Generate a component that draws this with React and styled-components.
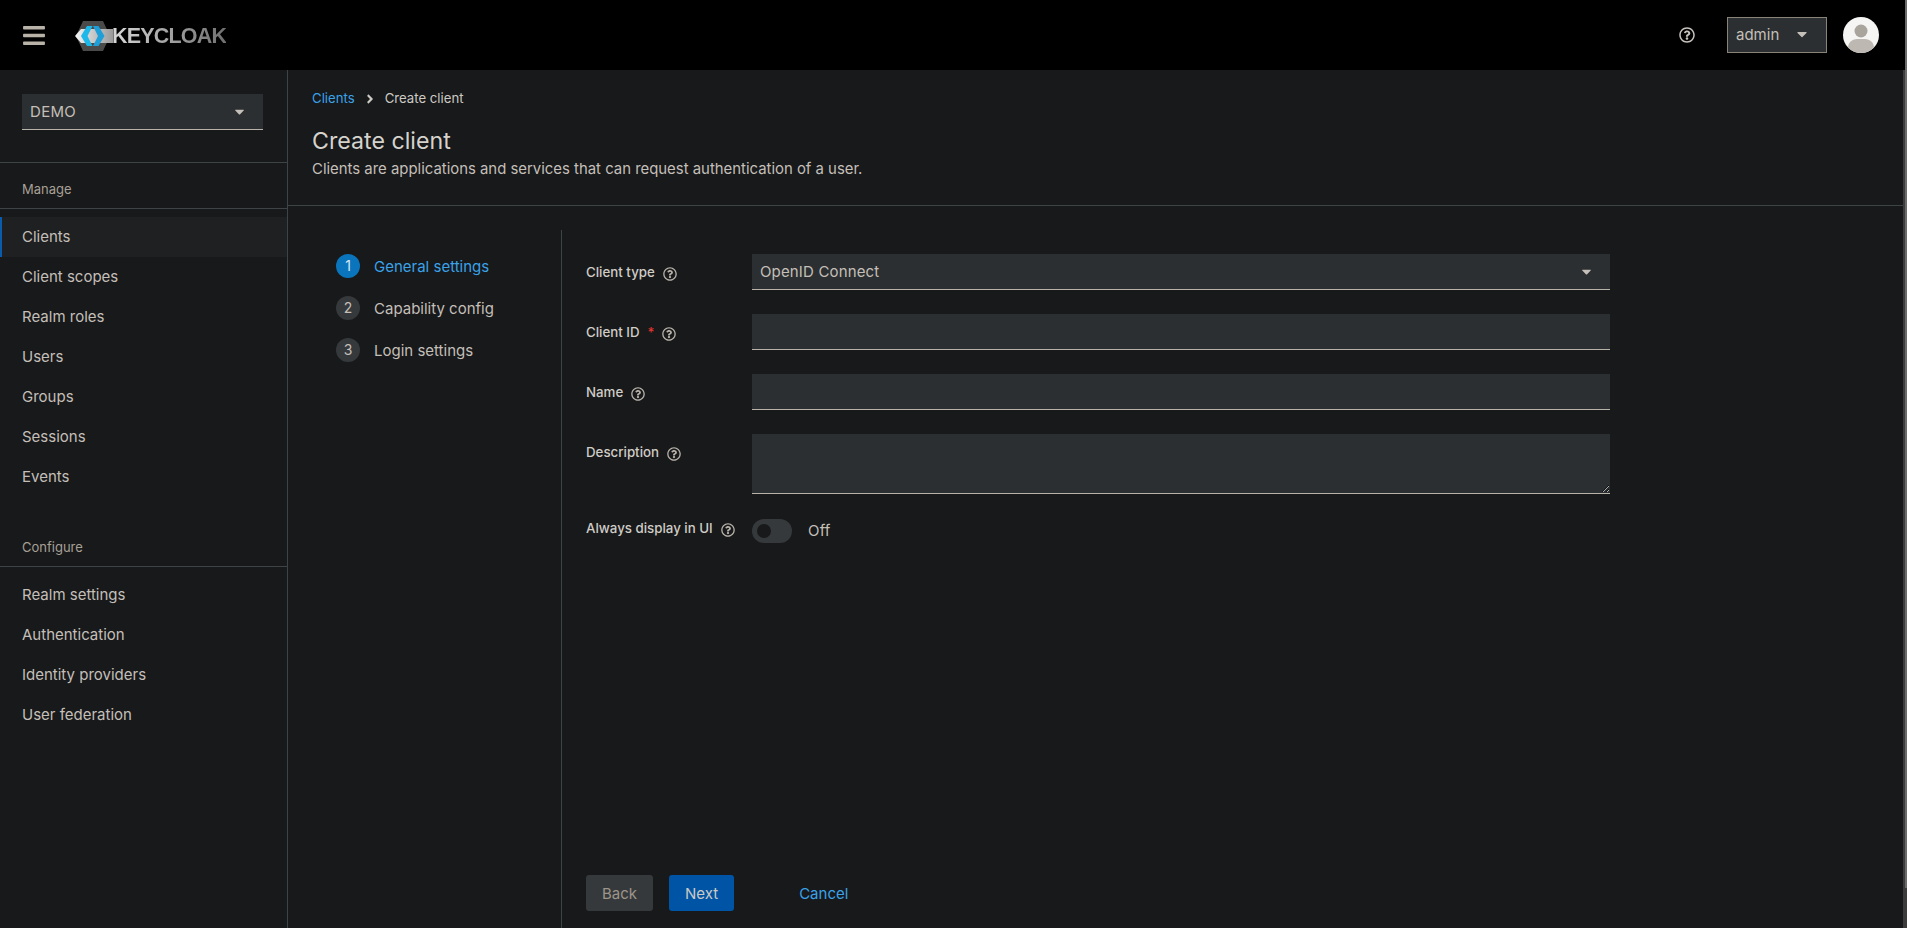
import React from "react";
import styled, { createGlobalStyle } from "styled-components";
import { FaBars, FaCaretDown, FaAngleRight, FaRegQuestionCircle } from "react-icons/fa";

const manageLinks = ["Clients", "Client scopes", "Realm roles", "Users", "Groups", "Sessions", "Events"];
const configureLinks = ["Realm settings", "Authentication", "Identity providers", "User federation"];
const steps = ["General settings", "Capability config", "Login settings"];

export default function App() {
  return (
    <>
      <GlobalStyle />
      <Page>
        <Header>
          <MenuButton>
            <FaBars />
          </MenuButton>
          <Logo>
            <LogoMark />
            <LogoText>KEYCLOAK</LogoText>
          </Logo>
          <HeaderTools>
            <HeaderHelp>
              <FaRegQuestionCircle />
            </HeaderHelp>
            <UserMenu>
              admin
              <FaCaretDown />
            </UserMenu>
            <Avatar />
          </HeaderTools>
        </Header>
        <Body>
          <Sidebar>
            <RealmArea>
              <RealmSelect>
                DEMO
                <FaCaretDown />
              </RealmSelect>
            </RealmArea>
            <NavTitle>Manage</NavTitle>
            <NavList>
              {manageLinks.map((link) => (
                <NavItem key={link} $active={link === "Clients"}>
                  {link}
                </NavItem>
              ))}
            </NavList>
            <NavTitle $second>Configure</NavTitle>
            <NavList>
              {configureLinks.map((link) => (
                <NavItem key={link}>{link}</NavItem>
              ))}
            </NavList>
          </Sidebar>
          <Main>
            <PageHead>
              <Breadcrumb>
                <CrumbLink>Clients</CrumbLink>
                <FaAngleRight />
                <span>Create client</span>
              </Breadcrumb>
              <Title>Create client</Title>
              <Subtitle>Clients are applications and services that can request authentication of a user.</Subtitle>
            </PageHead>
            <Wizard>
              <Steps>
                {steps.map((step, index) => (
                  <Step key={step} $current={index === 0}>
                    <StepNumber $current={index === 0}>{index + 1}</StepNumber>
                    <StepName>{step}</StepName>
                  </Step>
                ))}
              </Steps>
              <WizardMain>
                <Form>
                  <Label>
                    Client type
                    <Help />
                  </Label>
                  <SelectBox>
                    OpenID Connect
                    <FaCaretDown />
                  </SelectBox>
                  <Label>
                    Client ID
                    <Required>*</Required>
                    <Help />
                  </Label>
                  <Input />
                  <Label>
                    Name
                    <Help />
                  </Label>
                  <Input />
                  <Label>
                    Description
                    <Help />
                  </Label>
                  <TextArea />
                  <ToggleLabel>
                    Always display in UI
                    <Help />
                  </ToggleLabel>
                  <ToggleRow>
                    <Toggle>
                      <Knob />
                    </Toggle>
                    <ToggleText>Off</ToggleText>
                  </ToggleRow>
                </Form>
                <Footer>
                  <BackButton>Back</BackButton>
                  <NextButton>Next</NextButton>
                  <CancelLink>Cancel</CancelLink>
                </Footer>
              </WizardMain>
            </Wizard>
          </Main>
          <ScrollEdge />
        </Body>
        <ScrollThumb />
      </Page>
    </>
  );
}

function LogoMark() {
  return (
    <svg width="38" height="32" viewBox="0 0 38 32">
      <defs>
        <linearGradient id="band" x1="0" x2="1" y1="0" y2="0">
          <stop offset="0" stopColor="#f4f4f4" />
          <stop offset="1" stopColor="#9a9a9a" />
        </linearGradient>
      </defs>
      <path d="M8 1H28L35 16L28 31H8L1 16Z" fill="#4a4a4a" />
      <path d="M0 16L6 9H38V23H6Z" fill="url(#band)" />
      <path d="M12 6H17.5L12.5 16L17.5 26H12L6 16Z" fill="#1cb8ea" />
      <path d="M18 6H23.5L29.5 16L23.5 26H18L23 16Z" fill="#1e9fd8" />
    </svg>
  );
}

function Avatar() {
  return (
    <AvatarSvg viewBox="0 0 36 36">
      <defs>
        <clipPath id="avatar-circle">
          <circle cx="18" cy="18" r="18" />
        </clipPath>
      </defs>
      <circle cx="18" cy="18" r="18" fill="#f5f5f4" />
      <g clipPath="url(#avatar-circle)">
        <circle cx="18" cy="14" r="6.5" fill="#a9a49c" />
        <path d="M5 36V31C5 25.5 9 22 14 22H22C27 22 31 25.5 31 31V36Z" fill="#bdb9b2" />
      </g>
    </AvatarSvg>
  );
}

function Help() {
  return (
    <HelpIcon>
      <FaRegQuestionCircle />
    </HelpIcon>
  );
}

const GlobalStyle = createGlobalStyle`
  html, body {
    margin: 0;
    height: 100%;
    overflow: hidden;
    background: #17191b;
  }
  body {
    font-family: Inter, "Liberation Sans", sans-serif;
    font-size: 15px;
    color: #c4bfb8;
  }
`;

const Page = styled.div`
  position: relative;
  height: 928px;
  display: flex;
  flex-direction: column;
`;

const Header = styled.header`
  height: 70px;
  flex: none;
  display: flex;
  align-items: center;
  background: #000;
`;

const MenuButton = styled.div`
  width: 22px;
  margin-left: 23px;
  display: flex;
  color: #b8b2a9;
  svg {
    width: 22px;
    height: 25px;
  }
`;

const Logo = styled.div`
  margin: 2px 0 0 30px;
  display: flex;
  align-items: center;
`;

const LogoText = styled.span`
  margin-left: -1px;
  font-family: "Liberation Sans", sans-serif;
  font-weight: 700;
  font-size: 21.5px;
  letter-spacing: -0.8px;
  background: linear-gradient(90deg, #d8d8d8, #6f6f6f);
  -webkit-background-clip: text;
  background-clip: text;
  color: transparent;
`;

const HeaderTools = styled.div`
  margin-left: auto;
  margin-right: 28px;
  display: flex;
  align-items: center;
`;

const HeaderHelp = styled.div`
  display: flex;
  margin-right: 32px;
  font-size: 16px;
  color: #c8c3bc;
`;

const UserMenu = styled.div`
  box-sizing: border-box;
  width: 100px;
  height: 36px;
  padding: 0 16px 2px 8px;
  display: flex;
  align-items: center;
  justify-content: space-between;
  background: #2b2f31;
  border: 1px solid #8a8378;
  svg {
    font-size: 16px;
  }
`;

const AvatarSvg = styled.svg`
  width: 36px;
  height: 36px;
  margin-left: 16px;
`;

const Body = styled.div`
  flex: 1;
  min-height: 0;
  display: flex;
`;

const Sidebar = styled.aside`
  width: 287px;
  flex: none;
  border-right: 1px solid #3e4446;
`;

const RealmArea = styled.div`
  padding: 24px 24px 32px 22px;
  border-bottom: 1px solid #3e4446;
`;

const RealmSelect = styled.div`
  box-sizing: border-box;
  height: 36px;
  padding: 0 16px 1px 8px;
  display: flex;
  align-items: center;
  justify-content: space-between;
  background: #2b2f31;
  border-bottom: 1px solid #b8b2a9;
  letter-spacing: 0.3px;
`;

const NavTitle = styled.h2`
  margin: ${(p) => (p.$second ? "40px" : "0")} 0 0;
  padding: ${(p) => (p.$second ? "0 22px 8px" : "16px 22px 8px")};
  border-bottom: 1px solid #3e4446;
  font-size: 13px;
  font-weight: 400;
  line-height: 21px;
  color: #a8a095;
`;

const NavList = styled.nav`
  padding-top: 8px;
  display: flex;
  flex-direction: column;
`;

const NavItem = styled.a`
  box-sizing: border-box;
  height: 40px;
  padding: 0 0 2px 22px;
  display: flex;
  align-items: center;
  box-shadow: ${(p) => (p.$active ? "inset 2px 0 0 #0a5cab" : "none")};
  background: ${(p) => (p.$active ? "#1e2022" : "transparent")};
`;

const Main = styled.main`
  flex: 1;
  min-width: 0;
  display: flex;
  flex-direction: column;
`;

const PageHead = styled.div`
  padding: 18px 24px 24px;
  border-bottom: 1px solid #3e4446;
`;

const Breadcrumb = styled.div`
  display: flex;
  align-items: center;
  gap: 8px;
  font-size: 13.2px;
  line-height: 21px;
  color: #cdc9c3;
  svg {
    font-size: 14px;
  }
`;

const CrumbLink = styled.a`
  color: #3aa2e8;
`;

const Title = styled.h1`
  margin: 18px 0 0;
  font-size: 23.2px;
  font-weight: 400;
  line-height: 29px;
  color: #d6d3cd;
`;

const Subtitle = styled.p`
  margin: 1px 0 0;
  font-size: 14.9px;
  line-height: 24px;
`;

const Wizard = styled.div`
  flex: 1;
  min-height: 0;
  display: flex;
`;

const Steps = styled.ol`
  width: 225px;
  margin: 24px 0 0;
  padding: 24px 0 0 48px;
  list-style: none;
  display: flex;
  flex-direction: column;
  gap: 18px;
  border-right: 1px solid #3e4446;
`;

const Step = styled.li`
  height: 24px;
  display: flex;
  align-items: center;
  gap: 14px;
  line-height: 24px;
  color: ${(p) => (p.$current ? "#3aa2e8" : "#c4bfb8")};
`;

const StepNumber = styled.span`
  width: 24px;
  height: 24px;
  border-radius: 50%;
  display: flex;
  align-items: center;
  justify-content: center;
  font-size: 14px;
  background: ${(p) => (p.$current ? "#0a75bd" : "#36393b")};
  color: ${(p) => (p.$current ? "#d8e8f4" : "#c4bfb8")};
`;

const StepName = styled.span`
  padding-top: 1px;
`;

const WizardMain = styled.div`
  flex: 1;
  min-width: 0;
  padding: 48px 0 17px 24px;
  display: flex;
  flex-direction: column;
  justify-content: space-between;
`;

const Form = styled.div`
  width: 1024px;
  display: grid;
  grid-template-columns: 166px 858px;
  row-gap: 24px;
`;

const Label = styled.label`
  align-self: start;
  display: flex;
  align-items: center;
  padding-top: 8px;
  font-size: 13.3px;
  font-weight: 500;
  line-height: 21px;
  white-space: nowrap;
  color: #d0ccc6;
`;

const ToggleLabel = styled(Label)`
  padding-top: 0;
`;

const Required = styled.span`
  margin-left: 8px;
  color: #e0352b;
`;

const HelpIcon = styled.span`
  margin: 2px 0 0 8px;
  display: inline-flex;
  font-size: 14px;
  color: #b8b2a9;
`;

const SelectBox = styled.div`
  box-sizing: border-box;
  height: 36px;
  padding: 0 16px 1px 8px;
  display: flex;
  align-items: center;
  justify-content: space-between;
  background: #2b2f31;
  border-bottom: 1px solid #b8b2a9;
  letter-spacing: 0.15px;
`;

const Input = styled.input`
  box-sizing: border-box;
  height: 36px;
  border: 0;
  border-bottom: 1px solid #b8b2a9;
  border-radius: 0;
  background: #2b2f31;
  outline: none;
`;

const TextArea = styled.textarea`
  box-sizing: border-box;
  height: 60px;
  margin: 0;
  border: 0;
  border-bottom: 1px solid #b8b2a9;
  border-radius: 0;
  background: #2b2f31;
  outline: none;
  resize: vertical;
  color-scheme: dark;
`;

const ToggleRow = styled.div`
  margin-top: 1px;
  display: flex;
  align-items: center;
  gap: 16px;
`;

const ToggleText = styled.span`
  padding-bottom: 2px;
  letter-spacing: 0.2px;
`;

const Toggle = styled.span`
  box-sizing: border-box;
  width: 40px;
  height: 24px;
  padding-left: 5px;
  border-radius: 12px;
  display: flex;
  align-items: center;
  background: #36393b;
`;

const Knob = styled.span`
  width: 14px;
  height: 14px;
  border-radius: 50%;
  background: #17191a;
`;

const Footer = styled.div`
  display: flex;
  align-items: center;
`;

const Button = styled.button`
  height: 36px;
  padding: 0 16px;
  border: 0;
  border-radius: 3px;
  font: inherit;
`;

const BackButton = styled(Button)`
  background: #36393b;
  color: #9c958a;
`;

const NextButton = styled(Button)`
  margin-left: 16px;
  background: #0054a6;
  color: #cdc9c3;
`;

const CancelLink = styled.a`
  margin-left: 65px;
  color: #3aa2e8;
`;

const ScrollEdge = styled.div`
  width: 4px;
  flex: none;
  background: #3c3c3c;
`;

const ScrollThumb = styled.div`
  position: absolute;
  top: 0;
  right: 0;
  width: 2px;
  height: 888px;
  background: #6b6b6b;
`;
